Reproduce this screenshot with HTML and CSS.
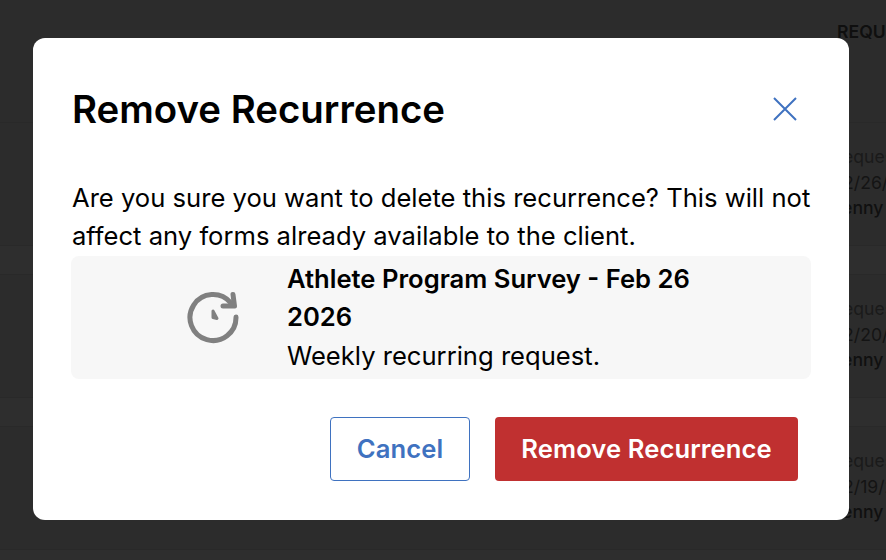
FILE: index.html
```html
<!DOCTYPE html>
<html lang="en">
<head>
<meta charset="utf-8">
<title>Remove Recurrence</title>
<link rel="stylesheet" href="styles.css">
</head>
<body>
<div class="page">
  <div class="table-head"><span class="col-label">REQUEST</span></div>
  <div class="row"><div class="cell"><span>Request</span><span class="date">02/26/2026</span><span class="who">Jenny</span></div></div>
  <div class="band"></div>
  <div class="row"><div class="cell"><span>Request</span><span class="date">02/20/2026</span><span class="who">Jenny</span></div></div>
  <div class="band"></div>
  <div class="row"><div class="cell"><span>Request</span><span class="date">02/19/2026</span><span class="who">Jenny</span></div></div>
  <div class="band"></div>
</div>
<div class="overlay">
  <div class="modal" role="dialog" aria-label="Remove Recurrence">
    <div class="modal-head">
      <h1 class="title">Remove Recurrence</h1>
      <svg class="close" width="24" height="24" viewBox="0 0 24 24" aria-hidden="true"><path d="M1 1 L23 23 M23 1 L1 23"/></svg>
    </div>
    <p class="message">Are you sure you want to delete this recurrence? This will not affect any forms already available to the client.</p>
    <div class="card">
      <div class="card-icon">
        <svg width="54" height="54" viewBox="0 0 54 54" aria-hidden="true">
          <path class="ring" d="M44.6 12.7 A23 23 0 1 0 50 27"/>
          <path class="ring" d="M47 4.5 L48.5 16 L37 16"/>
          <path class="hand" d="M27 21 L27 27.5 L31 28.5 Z"/>
        </svg>
      </div>
      <div class="card-text">
        <div class="card-title">Athlete Program Survey - Feb 26 2026</div>
        <div class="card-sub">Weekly recurring request.</div>
      </div>
    </div>
    <div class="actions">
      <button class="btn btn-cancel" type="button">Cancel</button>
      <button class="btn btn-remove" type="button">Remove Recurrence</button>
    </div>
  </div>
</div>
</body>
</html>
```
FILE: styles.css
```css
* { box-sizing: border-box; }
html, body { margin: 0; height: 100%; }
body { background: #2c2c2c; font-family: Inter, "Liberation Sans", sans-serif; overflow: hidden; position: relative; }
.page { display: flex; flex-direction: column; height: 560px; }
.table-head { flex: none; height: 123px; padding: 21px 0 0 837px; border-bottom: 1px solid #292929; white-space: nowrap; overflow: hidden; }
.col-label { font-size: 17.6px; line-height: 22px; font-weight: 600; color: #0f0f0f; }
.row { flex: none; height: 122px; background: #2c2c2c; display: flex; align-items: flex-start; padding-top: 21px; overflow: hidden; }
.band { flex: none; height: 30px; border-top: 1px solid #292929; border-bottom: 1px solid #292929; background: #2e2e2e; }
.cell { display: flex; flex-direction: column; padding-left: 832px; font-size: 17.6px; line-height: 25.6px; color: #1a1a1a; white-space: nowrap; }
.date { color: #141414; }
.who { font-weight: 500; color: #101010; }
.overlay { position: absolute; inset: 0; }
.modal { position: absolute; left: 33px; top: 38px; width: 816px; height: 482px; background: #fff; border-radius: 12px; padding: 47px 38px 39px 38px; display: flex; flex-direction: column; color: #000; }
.modal-head { display: flex; justify-content: space-between; align-items: center; height: 48px; padding-right: 14px; padding-left: 1px; }
.close { fill: none; stroke: #3f72c0; stroke-width: 2; }
.title { margin: 0; font-size: 38.4px; line-height: 48px; font-weight: 600; }
.message { margin: 46px 0 0 1px; font-size: 25.6px; line-height: 38.4px; }
.card { display: flex; align-items: center; height: 123px; background: #f7f7f7; border-radius: 8px; }
.card-icon { width: 216px; flex: none; display: flex; justify-content: center; padding-left: 68px; }
.ring { fill: none; stroke: #808080; stroke-width: 5; stroke-linecap: round; stroke-linejoin: round; }
.hand { fill: #808080; stroke: #808080; stroke-width: 3; stroke-linecap: round; stroke-linejoin: round; }
.card-text { width: 420px; font-size: 25.6px; line-height: 38.4px; }
.card-title { font-weight: 600; }
.actions { display: flex; justify-content: flex-end; gap: 25px; margin-top: 38px; padding-right: 13px; }
.btn { height: 64px; border-radius: 4px; font: 600 25.6px Inter, "Liberation Sans", sans-serif; letter-spacing: 0.1px; cursor: pointer; }
.btn-cancel { width: 140px; background: #fff; border: 1px solid #3f72c0; color: #3f72c0; }
.btn-remove { width: 303px; background: #c03030; border: 0; color: #fff; }
```
